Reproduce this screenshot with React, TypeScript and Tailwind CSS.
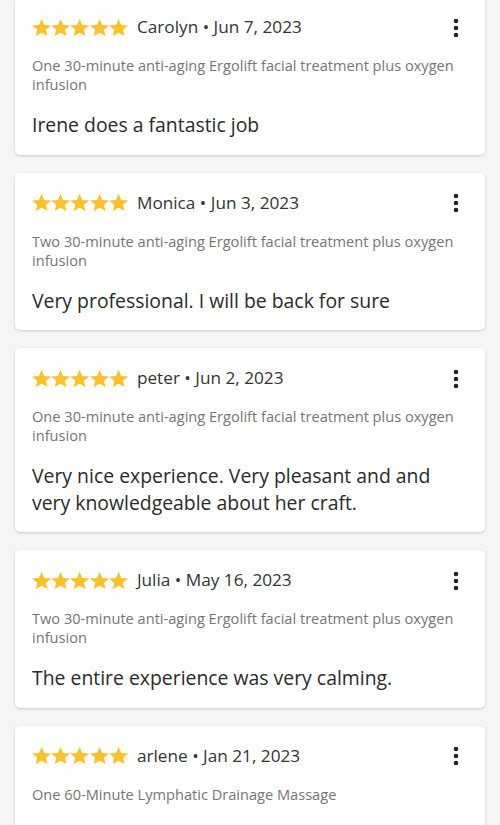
const reviews = [
  {
    name: "Carolyn",
    date: "Jun 7, 2023",
    service: "One 30-minute anti-aging Ergolift facial treatment plus oxygen infusion",
    comment: "Irene does a fantastic job",
  },
  {
    name: "Monica",
    date: "Jun 3, 2023",
    service: "Two 30-minute anti-aging Ergolift facial treatment plus oxygen infusion",
    comment: "Very professional. I will be back for sure",
  },
  {
    name: "peter",
    date: "Jun 2, 2023",
    service: "One 30-minute anti-aging Ergolift facial treatment plus oxygen infusion",
    comment: "Very nice experience. Very pleasant and and very knowledgeable about her craft.",
  },
  {
    name: "Julia",
    date: "May 16, 2023",
    service: "Two 30-minute anti-aging Ergolift facial treatment plus oxygen infusion",
    comment: "The entire experience was very calming.",
  },
  {
    name: "arlene",
    date: "Jan 21, 2023",
    service: "One 60-Minute Lymphatic Drainage Massage",
    comment: "Wonderful massage, highly recommend",
  },
]

function Star() {
  return (
    <svg viewBox="2 2 20 19" preserveAspectRatio="none" className="w-[19.2px] h-[17px] fill-[#f9c12e]">
      <path d="M12 17.27L18.18 21l-1.64-7.03L22 9.24l-7.19-.61L12 2 9.19 8.63 2 9.24l5.46 4.73L5.82 21z" />
    </svg>
  )
}

function MoreIcon() {
  return (
    <svg viewBox="0 0 28 28" className="w-7 h-7 fill-[#222]">
      <circle cx="14" cy="7" r="2.3" />
      <circle cx="14" cy="14" r="2.3" />
      <circle cx="14" cy="21" r="2.3" />
    </svg>
  )
}

function ReviewCard({ review }: { review: (typeof reviews)[number] }) {
  return (
    <div className="bg-white rounded-[5px] shadow-[0_1px_3px_rgba(0,0,0,0.18)] px-[17px] pt-4 pb-4">
      <div className="flex items-center h-7">
        <div className="flex">
          {[0, 1, 2, 3, 4].map((i) => (
            <Star key={i} />
          ))}
        </div>
        <span className="ml-[9px] text-[17.2px] text-[#333] leading-7">
          {review.name} • {review.date}
        </span>
        <button className="ml-auto -mr-[2px] mt-[1px]">
          <MoreIcon />
        </button>
      </div>
      <p className="mt-[15px] text-[14.6px] leading-[19px] text-[#757575]">{review.service}</p>
      <p className="mt-[18px] text-[19.4px] leading-[26.5px] text-[#2a2a2a]">{review.comment}</p>
    </div>
  )
}

export default function App() {
  return (
    <div
      className="h-screen bg-[#f4f5f7] px-[15px] overflow-hidden"
      style={{ fontFamily: '"Open Sans", sans-serif' }}
    >
      <div className="flex flex-col gap-[18px] -mt-[3px]">
        {reviews.map((r) => (
          <ReviewCard key={r.name} review={r} />
        ))}
      </div>
    </div>
  )
}
